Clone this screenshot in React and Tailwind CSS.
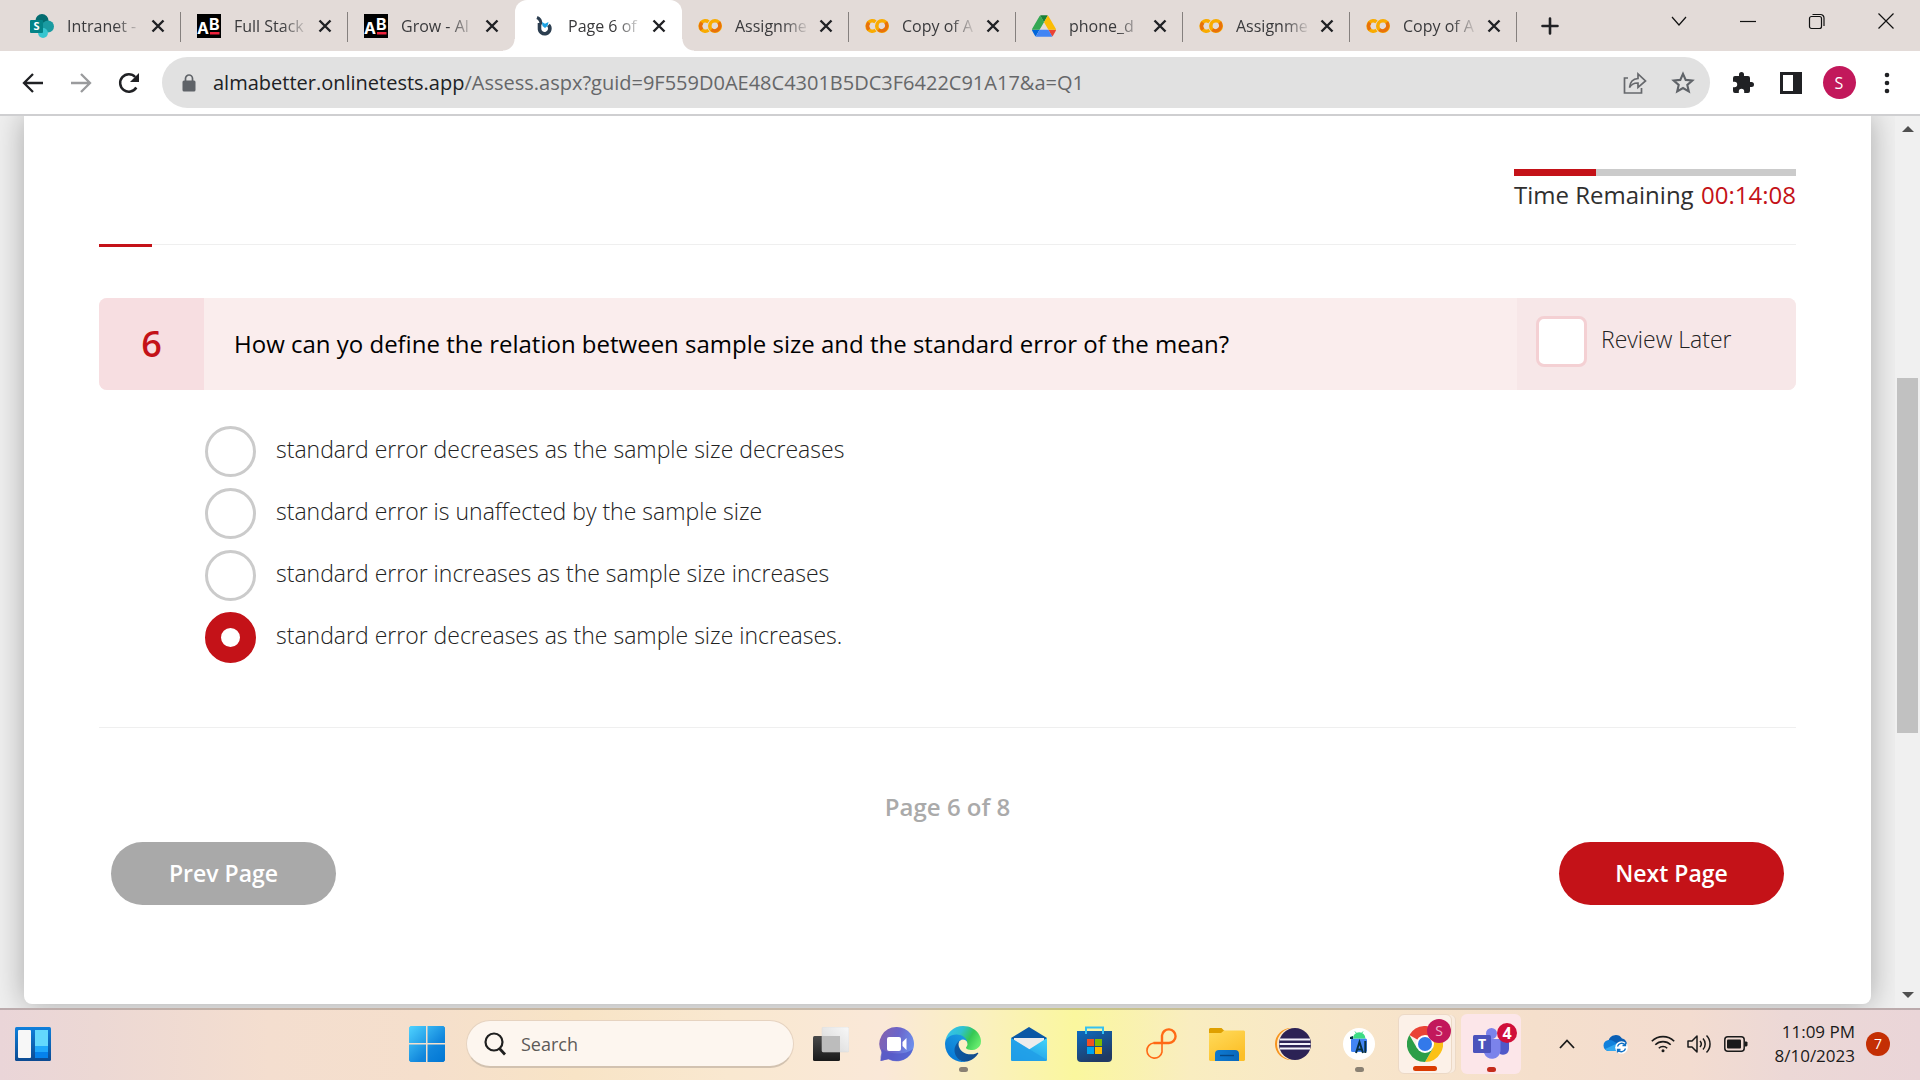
import React from "react";

const SANS = "font-['Open_Sans','Noto_Sans',sans-serif]";

/* ---------- site icons ---------- */

function SharePointIcon() {
  return (
    <svg viewBox="0 0 24 24" className="size-6">
      <circle cx="12" cy="6.5" r="6.5" fill="#036c70" />
      <circle cx="18" cy="12.5" r="6" fill="#1a9ba1" />
      <circle cx="13" cy="19" r="4.9" fill="#37c6d0" />
      <rect x="0" y="6" width="13" height="13" rx="1" fill="#038387" />
      <text x="6.5" y="16.4" textAnchor="middle" fontSize="11" fontWeight="700" fill="#fff" fontFamily="Open Sans, sans-serif">S</text>
    </svg>
  );
}

function AbIcon() {
  return (
    <svg viewBox="0 0 24 24" className="size-6">
      <rect width="24" height="24" fill="#000" />
      <text x="0" y="20" fontSize="16" fontWeight="700" fill="#fff" fontFamily="Inter, sans-serif">A</text>
      <text x="12" y="16" fontSize="16" fontWeight="700" fill="#fff" fontFamily="Inter, sans-serif">B</text>
      <rect x="13" y="18" width="9.500" height="2.500" fill="#f0223c" />
    </svg>
  );
}

function AssessIcon() {
  return (
    <svg viewBox="0 0 24 24" className="size-6">
      <path d="M6 3.500c2.500 1 4 3.500 4 7" fill="none" stroke="#2c3e50" strokeWidth="3" />
      <path d="M8.500 9v5a5.200 5.200 0 1 0 9-3" fill="none" stroke="#2c3e50" strokeWidth="3.600" />
      <path d="M11 8l3 1.800L17.500 8l-1 4-2.500 2-2.500-2z" fill="#1ba1e2" />
    </svg>
  );
}

function ColabIcon() {
  return (
    <svg viewBox="0 0 24 24" className="size-6" fill="none" strokeWidth="3.600">
      <path d="M10.500 7.900A5.200 5.200 0 1 0 10.500 16.100" stroke="#f9ab00" />
      <path d="M4 8.600A5.200 5.200 0 0 0 4 15.600" stroke="#e8710a" />
      <circle cx="17" cy="12" r="5.200" stroke="#f9ab00" />
      <path d="M20.700 8.400A5.200 5.200 0 0 1 13.400 15.700" stroke="#e8710a" />
    </svg>
  );
}

function DriveIcon() {
  return (
    <svg viewBox="0 0 87.3 78" className="size-6">
      <path d="m6.6 66.85 3.85 6.65c.8 1.4 1.95 2.5 3.3 3.3l13.75-23.8h-27.5c0 1.55.4 3.1 1.2 4.5z" fill="#0066da" />
      <path d="m43.65 25-13.75-23.8c-1.35.8-2.5 1.9-3.3 3.3l-25.4 44a9.06 9.06 0 0 0-1.2 4.5h27.5z" fill="#34a853" />
      <path d="m73.55 76.8c1.35-.8 2.5-1.9 3.3-3.3l1.6-2.75 7.65-13.25c.8-1.4 1.2-2.95 1.2-4.5h-27.502l5.852 11.5z" fill="#ea4335" />
      <path d="m43.65 25 13.75-23.8c-1.35-.8-2.9-1.2-4.5-1.2h-18.5c-1.6 0-3.15.45-4.5 1.2z" fill="#188038" />
      <path d="m59.8 53h-32.3l-13.75 23.8c1.35.8 2.9 1.2 4.5 1.2h50.8c1.6 0 3.15-.45 4.5-1.2z" fill="#4285f4" />
      <path d="m73.4 26.5-12.7-22c-.8-1.4-1.95-2.5-3.3-3.3l-13.75 23.8 16.15 28h27.45c0-1.55-.4-3.1-1.2-4.5z" fill="#fbbc04" />
    </svg>
  );
}

/* ---------- browser frame ---------- */

const TABS = [
  { title: "Intranet -", Icon: SharePointIcon, divider: true },
  { title: "Full Stack", Icon: AbIcon, divider: true },
  { title: "Grow - Al", Icon: AbIcon },
  { title: "Page 6 of", Icon: AssessIcon, active: true },
  { title: "Assignme", Icon: ColabIcon, divider: true },
  { title: "Copy of A", Icon: ColabIcon, divider: true },
  { title: "phone_d", Icon: DriveIcon, divider: true },
  { title: "Assignme", Icon: ColabIcon, divider: true },
  { title: "Copy of A", Icon: ColabIcon, divider: true },
];

function Tab({ title, Icon, active, divider }) {
  return (
    <div className={"relative flex h-[51px] w-[167px] min-w-0 items-center pl-4 pr-4 " + (active ? "rounded-t-xl bg-white" : "")}>
      {active && (
        <>
          <span className="absolute -left-3 bottom-0 size-3 bg-[radial-gradient(circle_at_0_0,transparent_11px,white_12px)]" />
          <span className="absolute -right-3 bottom-0 size-3 bg-[radial-gradient(circle_at_100%_0,transparent_11px,white_12px)]" />
        </>
      )}
      <span className="shrink-0"><Icon /></span>
      <span className="ml-[13px] min-w-0 flex-1 whitespace-nowrap text-base text-[#3a3a3c] [mask-image:linear-gradient(to_right,black_60%,transparent_94%)]">
        {title}
      </span>
      <button aria-label={"Close " + title} className="ml-1 shrink-0">
        <svg viewBox="0 0 14 14" className="size-3.5" stroke="#202124" strokeWidth="2.400"><path d="M1.500 1.500l11 11M12.500 1.500l-11 11" /></svg>
      </button>
      {divider && <span className="absolute right-0 top-3 h-[30px] w-px bg-[#85807e]" />}
    </div>
  );
}

function TabStrip() {
  const controls = [
    ["Search tabs", <path d="M8 9l7 8 7-8" />],
    ["Minimize", <path d="M7 13.500h16" />],
    ["Restore", <><rect x="7.500" y="8.500" width="12" height="12" rx="2" /><path d="M10.500 6.500h8a3.500 3.500 0 0 1 3.500 3.500v8" /></>],
    ["Close window", <path d="M7.500 5.500l15 15M22.500 5.500l-15 15" />],
  ];
  return (
    <div className="flex h-[51px] bg-[#e3dbd8] pl-3.5">
      <div className="flex min-w-0">
        {TABS.map((t, i) => <Tab key={i} {...t} />)}
      </div>
      <button aria-label="New tab" className="ml-2 flex w-[50px] items-center justify-center">
        <svg viewBox="0 0 18 18" className="size-[18px]" stroke="#202124" strokeWidth="2.600" strokeLinecap="round"><path d="M9 1.500v15M1.500 9h15" /></svg>
      </button>
      <div className="ml-auto flex">
        {controls.map(([label, shape]) => (
          <button key={label} aria-label={label} className="flex w-[69px] items-start justify-center pt-2">
            <svg viewBox="0 0 30 27" className="h-[27px] w-[30px]" fill="none" stroke="#111" strokeWidth="1.200">{shape}</svg>
          </button>
        ))}
      </div>
    </div>
  );
}

function ToolButton({ label, children }) {
  return <button aria-label={label} className="flex h-12 w-12 shrink-0 items-center justify-center">{children}</button>;
}

function Toolbar() {
  return (
    <div className="flex h-[65px] items-center gap-[9px] border-b-2 border-[#cfcfd1] bg-white px-[9px]">
      <div className="flex">
        <ToolButton label="Back">
          <svg viewBox="0 0 22 22" className="size-[22px]" fill="none" stroke="#202124" strokeWidth="2.300"><path d="M21 11H2.500M11 2L2 11l9 9" /></svg>
        </ToolButton>
        <ToolButton label="Forward">
          <svg viewBox="0 0 22 22" className="size-[22px]" fill="none" stroke="#9a9b9d" strokeWidth="2.300"><path d="M1 11h18.500M11 2l9 9-9 9" /></svg>
        </ToolButton>
        <ToolButton label="Reload">
          <svg viewBox="0 0 22 22" className="size-[22px]"><path d="M18.300 15.500A8.700 8.700 0 1 1 17.200 5" fill="none" stroke="#202124" strokeWidth="2.500" /><path d="M21 1v9h-9z" fill="#202124" /></svg>
        </ToolButton>
      </div>
      <div className="flex h-[51px] min-w-0 flex-1 items-center rounded-full bg-[#e1e1e1] pl-5 pr-[3px]">
        <svg viewBox="0 0 14 18" className="h-[18px] w-3.5 shrink-0"><rect x="0.500" y="6.500" width="13" height="11" rx="1.500" fill="#5f6368" /><path d="M3.500 7V4.500a3.500 3.500 0 0 1 7 0V7" fill="none" stroke="#5f6368" strokeWidth="1.700" /></svg>
        <div aria-label="Address" className="ml-[17px] min-w-0 flex-1 overflow-hidden whitespace-nowrap text-xl text-[#666769]">
          <span className="text-[#202124]">almabetter.onlinetests.app</span>/Assess.aspx?guid=9F559D0AE48C4301B5DC3F6422C91A17&amp;a=Q1
        </div>
        <ToolButton label="Share">
          <svg viewBox="0 0 24 22" className="h-[22px] w-6" fill="none" stroke="#66686c" strokeWidth="1.700"><path d="M5 6H1.500v15h17v-5" /><path d="M6.500 15.500C7 10 10.500 6.800 15 6.500V2l7.500 7L15 15.500V11c-4-.2-6.500 1.200-8.500 4.500z" /></svg>
        </ToolButton>
        <ToolButton label="Bookmark">
          <svg viewBox="0 0 24 24" className="size-6"><path d="M12 2.800l2.700 6.100 6.600.6-5 4.400 1.500 6.500L12 17l-5.800 3.400 1.500-6.500-5-4.400 6.600-.6z" fill="none" stroke="#5f6368" strokeWidth="2.100" /></svg>
        </ToolButton>
      </div>
      <div className="flex">
        <ToolButton label="Extensions">
          <svg viewBox="0 0 24 24" className="size-6" fill="#202124"><path d="M20.500 11H19V7a2 2 0 0 0-2-2h-4V3.500a2.500 2.500 0 0 0-5 0V5H4a2 2 0 0 0-2 2v3.800h1.500a2.700 2.700 0 0 1 0 5.400H2V20a2 2 0 0 0 2 2h3.800v-1.500a2.700 2.700 0 0 1 5.400 0V22H17a2 2 0 0 0 2-2v-4h1.500a2.500 2.500 0 0 0 0-5z" /></svg>
        </ToolButton>
        <ToolButton label="Side panel">
          <svg viewBox="0 0 22 22" className="size-[22px]"><path d="M0 0h22v22H0zM3 3v16h10V3z" fillRule="evenodd" fill="#202124" /></svg>
        </ToolButton>
        <ToolButton label="Profile">
          <span className="flex size-[33px] items-center justify-center rounded-full bg-[#c2185b] text-base text-white">S</span>
        </ToolButton>
        <ToolButton label="Menu">
          <svg viewBox="0 0 6 22" className="h-[22px] w-1.5" fill="#202124"><circle cx="3" cy="3" r="2.300" /><circle cx="3" cy="11" r="2.300" /><circle cx="3" cy="19" r="2.300" /></svg>
        </ToolButton>
      </div>
    </div>
  );
}

/* ---------- assessment page ---------- */

const OPTIONS = [
  "standard error decreases as the sample size decreases",
  "standard error is unaffected by the sample size",
  "standard error increases as the sample size increases",
  "standard error decreases as the sample size increases.",
];

function Assessment() {
  return (
    <main className="mx-6 mb-1 min-w-0 flex-1 rounded-b-lg bg-white px-[75px] shadow-[0_0_30px_rgba(0,0,0,0.3)]">
      <div className="flex justify-end pt-[53px]">
        <div className="w-[282px]">
          <div className="h-[7px] bg-[#cbcbcb]"><div className="h-full w-[82px] bg-[#c41218]" /></div>
          <p className="mt-0.5 flex h-[34px] items-center justify-between whitespace-nowrap text-2xl text-[#2f2f2f]">
            <span>Time Remaining</span> <span className="font-medium text-[#c41218]">00:14:08</span>
          </p>
        </div>
      </div>

      <div className="mt-[32px] h-[3px] border-t border-[#efefef]"><div className="-mt-px h-[3px] w-[53px] bg-[#c41218]" /></div>

      <section className="mt-[51px] flex h-[92px] overflow-hidden rounded-lg bg-[#faeded]">
        <div className="flex w-[105px] items-center justify-center bg-[#f7dee1] text-4xl font-semibold text-[#c41218]">6</div>
        <h1 className="flex flex-1 items-center pl-[30px] text-2xl text-black">
          How can yo define the relation between sample size and the standard error of the mean?
        </h1>
        <label className="flex w-[279px] items-start bg-[#f7e7e8] pl-[19px] pt-[18px] text-[23px] font-[350] text-[#222]">
          <input type="checkbox" className="size-[51px] appearance-none rounded-lg border-[3px] border-[#f4d0d3] bg-white" />
          <span className="ml-3.5 leading-[46px]">Review Later</span>
        </label>
      </section>

      <fieldset aria-label="Answers" className="mt-9 flex flex-col gap-[11px] pl-[106px]">
        {OPTIONS.map((o, i) => (
          <label key={i} className="flex h-[51px] items-start text-[23px] font-[350] text-[#222]">
            <input
              type="radio"
              name="answer"
              defaultChecked={i === 3}
              className="size-[51px] appearance-none rounded-full border-[3px] border-[#cbcbcb] bg-white checked:border-[16px] checked:border-[#c41218]"
            />
            <span className="ml-5 leading-[46px]">{o}</span>
          </label>
        ))}
      </fieldset>

      <footer className="mt-16 border-t border-[#efefef] px-3 pt-[61px]">
        <p className="text-center text-2xl font-semibold leading-9 text-[#aaa]">Page 6 of 8</p>
        <div className="mt-[17px] flex justify-between pb-[99px]">
          <button className="h-[63px] w-[225px] rounded-full bg-[#a9a9a9] text-[23px] font-semibold text-white">Prev Page</button>
          <button className="h-[63px] w-[225px] rounded-full bg-[#c41218] text-[23px] font-semibold text-white">Next Page</button>
        </div>
      </footer>
    </main>
  );
}

function Scrollbar() {
  return (
    <div className="z-10 flex w-[25px] shrink-0 flex-col items-center bg-[#f0f0f0] py-2.5">
      <svg viewBox="0 0 12 6" className="h-1.5 w-3" fill="#505050"><path d="M0 6l6-6 6 6z" /></svg>
      <div className="flex w-full flex-1 flex-col">
        <div className="flex-[246]" />
        <div className="ml-0.5 w-[21px] flex-[355] bg-[#c1c1c1]" />
        <div className="flex-[259]" />
      </div>
      <svg viewBox="0 0 12 6" className="h-1.5 w-3" fill="#505050"><path d="M0 0h12L6 6z" /></svg>
    </div>
  );
}

/* ---------- taskbar ---------- */

function WidgetsIcon() {
  return (
    <svg viewBox="0 0 36 34" className="h-[34px] w-9">
      <defs>
        <linearGradient id="wg" x1="0" y1="0" x2="0" y2="1"><stop stopColor="#0f80dc" /><stop offset="1" stopColor="#0b4a92" /></linearGradient>
      </defs>
      <rect width="36" height="34" rx="1.500" fill="url(#wg)" />
      <rect x="3" y="3" width="13" height="28" rx="1" fill="#f7f7f7" />
      <rect x="20" y="3" width="13" height="16" fill="#63d8fd" />
      <rect x="20" y="19" width="13" height="6" fill="#1fa8fb" />
      <rect x="20" y="25" width="13" height="6" fill="#0582ec" />
    </svg>
  );
}

function StartIcon() {
  return (
    <svg viewBox="0 0 36 36" className="size-9">
      <defs>
        <linearGradient id="win" gradientUnits="userSpaceOnUse" x1="0" y1="0" x2="34" y2="36"><stop stopColor="#4fd3ff" /><stop offset="0.650" stopColor="#1186dc" /><stop offset="1" stopColor="#0277d4" /></linearGradient>
      </defs>
      <path d="M1.500 0H17v17H0V1.500zM18.500 0H34.500L36 1.500V17H18.500zM0 18.500h17V36H1.500L0 34.500zM18.500 18.500H36v16L34.500 36h-16z" fill="url(#win)" />
    </svg>
  );
}

function TaskViewIcon() {
  return (
    <svg viewBox="0 0 36 34" className="h-[34px] w-9">
      <defs>
        <linearGradient id="tv" x1="0" y1="0" x2="0" y2="1"><stop stopColor="#4a4a4a" /><stop offset="1" stopColor="#191919" /></linearGradient>
        <linearGradient id="tw" x1="1" y1="0" x2="0" y2="1"><stop stopColor="#f8f8f8" /><stop offset="1" stopColor="#d5d5d5" /></linearGradient>
      </defs>
      <rect y="9" width="27" height="25" rx="1.500" fill="url(#tv)" />
      <rect x="9" width="27" height="25" rx="1.500" fill="url(#tw)" stroke="#dadada" strokeWidth="0.500" />
      <path d="M9 9h18v16H10.500L9 23.500z" fill="#bcbcbc" />
    </svg>
  );
}

function ChatIcon() {
  return (
    <svg viewBox="0 0 36 36" className="size-9">
      <defs>
        <linearGradient id="ch" x1="0" y1="0.200" x2="1" y2="0.500"><stop stopColor="#8462ae" /><stop offset="0.500" stopColor="#6b65ca" /><stop offset="1" stopColor="#6d90ec" /></linearGradient>
      </defs>
      <path d="M18 1a17 17 0 1 1-8 32L1.500 35 3 27A17 17 0 0 1 18 1z" fill="url(#ch)" />
      <path d="M3 27a17 17 0 0 0 31-4c-8 6-22 6-31 0l-1.500 8 .2 4L10 33z" fill="#5059c9" opacity="0.700" />
      <rect x="8" y="11" width="14" height="14" rx="2" fill="#fff" />
      <path d="M23.500 16l4-4v12l-4-4z" fill="#fff" />
    </svg>
  );
}

function EdgeIcon() {
  return (
    <svg viewBox="4.63 4.92 256 256" className="size-9">
      <defs>
        <linearGradient id="e1" x1="0" y1="0.500" x2="1" y2="0.600"><stop stopColor="#0c59a4" /><stop offset="1" stopColor="#114a8b" /></linearGradient>
        <linearGradient id="e2" x1="0.800" y1="0" x2="0.200" y2="1"><stop stopColor="#1b9de2" /><stop offset="0.600" stopColor="#0f85d9" /><stop offset="1" stopColor="#0374d4" /></linearGradient>
        <linearGradient id="e3" x1="0" y1="0.200" x2="1" y2="0.600"><stop stopColor="#35c1f1" /><stop offset="0.400" stopColor="#2fc2cf" /><stop offset="0.700" stopColor="#36c752" /><stop offset="1" stopColor="#66eb6e" /></linearGradient>
      </defs>
      <path d="M235.680 195.460a93.730 93.730 0 0 1-10.540 4.710 101.870 101.870 0 0 1-35.900 6.460c-47.320 0-88.540-32.550-88.540-74.320A31.480 31.480 0 0 1 117.130 105c-42.800 1.800-53.800 46.400-53.800 72.530 0 73.880 68.090 81.370 82.760 81.370 7.910 0 19.840-2.300 27-4.560l1.310-.44a128.340 128.340 0 0 0 66.600-52.800 4 4 0 0 0-5.320-5.640z" fill="url(#e1)" />
      <path d="M110.340 246.340A79.200 79.200 0 0 1 87.600 225a80.720 80.720 0 0 1 29.530-120c3.120-1.470 8.450-4.130 15.540-4a32.350 32.350 0 0 1 25.690 13 31.880 31.880 0 0 1 6.360 18.660c0-.21 24.460-79.600-80-79.600-43.900 0-80 41.660-80 78.210a130.150 130.150 0 0 0 12.110 56 128 128 0 0 0 156.380 67.110 75.550 75.550 0 0 1-62.780-8z" fill="url(#e2)" />
      <path d="M156.940 153.780c-.81 1.050-3.300 2.500-3.300 5.660 0 2.610 1.700 5.120 4.720 7.230 14.380 10 41.490 8.680 41.560 8.680a59.560 59.560 0 0 0 30.270-8.350 61.380 61.380 0 0 0 30.430-52.880c.26-22.410-8-37.310-11.340-43.910C228.090 28.760 182.350 4.920 132.610 4.920a128 128 0 0 0-128 126.200c.48-36.540 36.800-66.050 80-66.050 3.500 0 23.460.34 42 10.070 16.340 8.580 24.900 18.940 30.850 29.210 6.180 10.670 7.280 24.150 7.280 29.520s-2.740 13.330-7.800 19.910z" fill="url(#e3)" />
    </svg>
  );
}

function MailIcon() {
  return (
    <svg viewBox="0 0 36 34" className="h-[34px] w-9">
      <defs>
        <linearGradient id="ml" x1="1" y1="0" x2="0.300" y2="1"><stop stopColor="#43d4fa" /><stop offset="1" stopColor="#1a98e4" /></linearGradient>
      </defs>
      <path d="M0 11L18 0l18 11v5H0z" fill="#0a58a5" />
      <path d="M3 11h30v5L18 25 3 16z" fill="#ececec" />
      <path d="M0 11l18 11.500L36 11v22l-1 1H1l-1-1z" fill="url(#ml)" />
      <path d="M0 11l36 22-1 1H1l-1-1z" fill="#219fe8" opacity="0.850" />
    </svg>
  );
}

function StoreIcon() {
  return (
    <svg viewBox="0 0 36 36" className="size-9">
      <defs>
        <linearGradient id="st" x1="0" y1="0" x2="0.500" y2="1"><stop stopColor="#0c6bc0" /><stop offset="1" stopColor="#213a63" /></linearGradient>
      </defs>
      <path d="M0 5h35v27a4 4 0 0 1-4 4H4a4 4 0 0 1-4-4z" fill="url(#st)" />
      <path d="M9 8V1.500h17V8" fill="none" stroke="#35c1f1" strokeWidth="2" />
      <path d="M10 13h7v7h-7z" fill="#f25022" /><path d="M18 13h7v7h-7z" fill="#7fba00" />
      <path d="M10 21h7v7h-7z" fill="#00a4ef" /><path d="M18 21h7v7h-7z" fill="#ffb900" />
    </svg>
  );
}

function LoopIcon() {
  return (
    <svg viewBox="0 0 36 36" className="size-9" fill="none" stroke="#ff6a16">
      <path d="M19 18V9.500a6.800 6.800 0 1 1 7 7.500H10.500" strokeWidth="2.400" />
      <path d="M19 16v10a7.600 7.600 0 1 1-8.500-9H19" strokeWidth="1.600" />
    </svg>
  );
}

function FolderIcon() {
  return (
    <svg viewBox="0 0 36 34" className="h-[34px] w-9">
      <defs>
        <linearGradient id="fd" x1="0" y1="0" x2="0.600" y2="1"><stop stopColor="#ffdb5c" /><stop offset="1" stopColor="#fcbf27" /></linearGradient>
        <linearGradient id="fb" x1="0" y1="0" x2="1" y2="0"><stop stopColor="#0e7ad2" /><stop offset="1" stopColor="#0a68bb" /></linearGradient>
      </defs>
      <path d="M0 2l1-1h11.500l3 3-3 3H0z" fill="#dfa000" />
      <path d="M0 6h12l3-2.500h20l1 1V33l-1 1H1l-1-1z" fill="url(#fd)" />
      <path d="M6 34v-7a4 4 0 0 1 4-4h16a4 4 0 0 1 4 4v7z" fill="url(#fb)" />
      <path d="M11 28.500h14" stroke="#064785" strokeWidth="1.400" />
    </svg>
  );
}

function EclipseIcon() {
  return (
    <svg viewBox="0 0 36 36" className="size-9">
      <circle cx="16" cy="18" r="16" fill="#f7941e" />
      <circle cx="18" cy="18" r="16" fill="#fbe8c8" />
      <circle cx="20" cy="18" r="16" fill="#2c2255" />
      <path d="M5 13.500h30M4.500 18h31M5 22.500h30" stroke="#f3f1fa" strokeWidth="1.800" />
    </svg>
  );
}

function AndroidStudioIcon() {
  return (
    <svg viewBox="0 0 36 36" className="size-9">
      <circle cx="18" cy="18" r="16" fill="#fff" />
      <rect x="10" y="12.500" width="16" height="13.500" rx="1.500" fill="#4285f4" />
      <path d="M12 12.500a6.200 6.200 0 0 1 12.400 0z" fill="#3ddc84" />
      <path d="M14 5.500l2 2.500M22 5.500L20 8" stroke="#3ddc84" strokeWidth="1" />
      <path d="M15 27l3.500-11L22 27M16 23.500h5M24.300 15v12" fill="none" stroke="#073042" strokeWidth="2" />
      <path d="M9 11l3-1v3h-3z" fill="#073042" />
    </svg>
  );
}

function ChromeIcon() {
  return (
    <svg viewBox="0 0 36 36" className="size-9">
      <path d="M18 18L2.400 9A18 18 0 0 1 33.600 9H18z" fill="#ea4335" />
      <path d="M18 18V9h15.600A18 18 0 0 1 18 36l7.800-13.500z" fill="#fbc116" />
      <path d="M18 18l7.800 4.500L18 36A18 18 0 0 1 2.400 9l7.800 13.500z" fill="#2c9e48" />
      <circle cx="18" cy="18" r="9" fill="#fff" />
      <circle cx="18" cy="18" r="7" fill="#3379ea" />
    </svg>
  );
}

function TeamsIcon() {
  return (
    <svg viewBox="0 0 36 36" className="size-9">
      <path d="M25 13h11v10a6 6 0 0 1-9 5z" fill="#5059c9" />
      <circle cx="18.500" cy="7.500" r="5.500" fill="#7b83eb" />
      <path d="M11 13h16.500v12a8.500 8.500 0 0 1-16.500 2z" fill="#7b83eb" />
      <rect y="9" width="18" height="18" rx="1.500" fill="#4b53bc" />
      <text x="9" y="23" textAnchor="middle" fontSize="14" fontWeight="700" fill="#fff" fontFamily="Open Sans, sans-serif">T</text>
    </svg>
  );
}

const APPS = [
  { label: "Task View", Icon: TaskViewIcon },
  { label: "Chat", Icon: ChatIcon },
  { label: "Edge", Icon: EdgeIcon, mark: "w-[9px] bg-[#8a8173]" },
  { label: "Mail", Icon: MailIcon },
  { label: "Microsoft Store", Icon: StoreIcon },
  { label: "Loop", Icon: LoopIcon },
  { label: "File Explorer", Icon: FolderIcon },
  { label: "Eclipse", Icon: EclipseIcon },
  { label: "Android Studio", Icon: AndroidStudioIcon, mark: "w-[9px] bg-[#8a8173]" },
  { label: "Chrome", Icon: ChromeIcon, mark: "w-6 bg-[#da3b01]", box: "border border-[#ecd9c6] bg-[#fcf1e8] shadow-[4px_0_0_-1px_#f9ece0,5px_0_0_-1px_#ecd9c6]", width: "w-[54px]", badge: "S", badgeStyle: "-right-2 -top-[7px] size-6 bg-[#c2185b] text-sm text-[#f0b4cb]" },
  { label: "Teams", Icon: TeamsIcon, mark: "w-[9px] bg-[#c42b1c]", box: "bg-[#fce6e9]", width: "w-[60px]", badge: "4", badgeStyle: "-right-2 -top-[3px] size-5 bg-[#d0103a] text-base font-bold text-white" },
];

function AppButton({ label, Icon, mark, box = "", width = "w-[60px]", badge, badgeStyle }) {
  return (
    <div className="flex w-[66px] justify-center">
      <button aria-label={label} className={"relative flex h-[60px] items-center justify-center rounded-md " + width + " " + box}>
        <span className="relative flex size-9 items-center justify-center">
          <Icon />
          {badge && <span className={"absolute flex items-center justify-center rounded-full leading-none " + badgeStyle}>{badge}</span>}
        </span>
        {mark && <span className={"absolute bottom-0.5 h-[5px] rounded-full " + mark} />}
      </button>
    </div>
  );
}

function Tray() {
  return (
    <div className="flex items-center justify-end pr-[30px]">
      <button aria-label="Show hidden icons">
        <svg viewBox="0 0 16 10" className="h-2.5 w-4" fill="none" stroke="#1a1a1a" strokeWidth="1.800"><path d="M1 9l7-7.500L15 9" /></svg>
      </button>
      <svg viewBox="0 0 26 20" className="ml-7 h-5 w-[26px]">
        <path d="M6 17a5.500 5.500 0 0 1-.5-10.500A7.500 7.500 0 0 1 19 4.500c3 .5 5 3 5 6.500L17 17z" fill="#0a5fb5" />
        <path d="M6 17a5.500 5.500 0 0 1 0-11c3-.2 5.500 1.500 9 4.500l-5 6.500z" fill="#1181dc" />
        <path d="M2 15l12-5.500 4 4V17H6a5.500 5.500 0 0 1-4-2z" fill="#32a8f0" />
        <circle cx="18.500" cy="13.500" r="6.300" fill="#fff" />
        <path d="M14.500 12.500a4.200 4.200 0 0 1 7.500-1.500M22.500 14.500a4.200 4.200 0 0 1-7.500 1.500M22.500 8.500V11.500h-3M14.500 18.500V15.500h3" fill="none" stroke="#1070c4" strokeWidth="1.300" />
      </svg>
      <svg viewBox="0 0 24 18" className="ml-[22px] h-[18px] w-6" fill="none" stroke="#1a1a1a" strokeWidth="1.600">
        <path d="M.8 6.300a15.800 15.800 0 0 1 22.400 0M4.300 9.800a10.900 10.900 0 0 1 15.400 0M7.800 13.200a6 6 0 0 1 8.400 0" />
        <circle cx="12" cy="15.800" r="1.500" fill="#1a1a1a" stroke="none" />
      </svg>
      <svg viewBox="0 0 25 20" className="ml-3 h-5 w-[25px]" fill="none" stroke="#1a1a1a" strokeWidth="1.500">
        <path d="M1 7h4l5-5v16l-5-5H1z" strokeLinejoin="round" />
        <path d="M13 7a4.500 4.500 0 0 1 0 6M16 4.500a8 8 0 0 1 0 11M19.500 1.500a12 12 0 0 1 0 17" />
      </svg>
      <svg viewBox="0 0 24 16" className="ml-3 h-4 w-6">
        <rect x="0.800" y="0.800" width="19.400" height="14.400" rx="3" fill="none" stroke="#1a1a1a" strokeWidth="1.500" />
        <rect x="3" y="3.500" width="14" height="9" rx="1" fill="#1a1a1a" />
        <path d="M21 5.500h1.500l1 1v3l-1 1H21z" fill="#1a1a1a" />
      </svg>
      <div className="ml-[26px] text-right text-[17px] leading-6 text-[#1a1a1a]">
        <div>11:09 PM</div>
        <div>8/10/2023</div>
      </div>
      <span className="ml-[11px] flex size-6 items-center justify-center rounded-full bg-[#c42f04] text-sm font-medium text-white">7</span>
    </div>
  );
}

function Taskbar() {
  return (
    <div className="grid h-[72px] grid-cols-[1fr_auto_1fr] border-t-2 border-black/20 bg-[linear-gradient(90deg,#ead5d8_0%,#ecd8d4_5%,#f4decf_14%,#f5dfcc_22%,#f8e4c6_30%,#f9e8d0_38%,#fae8d8_46%,#faf0c0_51%,#faf79e_56%,#f9edc0_62%,#f8e6ca_70%,#f5dfcc_80%,#f3dcd0_88%,#ecd8d6_93%,#ead5d8_100%)] pb-0.5">
      <div className="flex items-center pl-[15px]"><button aria-label="Widgets"><WidgetsIcon /></button></div>
      <div className="flex items-center pr-0.5">
        <div className="flex w-[66px] justify-center"><button aria-label="Start"><StartIcon /></button></div>
        <label className="ml-1.5 mr-1 flex h-12 w-[328px] items-center rounded-full border border-b-2 border-[#e6d3c0] border-b-[#d2c2b0] bg-[#fdf6ef] pl-4">
          <svg viewBox="0 0 24 24" className="size-6 shrink-0" fill="none" stroke="#1f1f1f" strokeWidth="2.200"><circle cx="11" cy="10" r="8.500" /><path d="M16.500 16.500l5.500 6" strokeWidth="2.800" /></svg>
          <input aria-label="Search" placeholder="Search" className="ml-3.5 w-full min-w-0 bg-transparent text-lg text-[#5c5a58] outline-none placeholder:text-[#5c5a58]" />
        </label>
        {APPS.map((a) => <AppButton key={a.label} {...a} />)}
      </div>
      <Tray />
    </div>
  );
}

export default function App() {
  return (
    <div className={"flex min-h-screen flex-col bg-[#efefef] " + SANS}>
      <TabStrip />
      <Toolbar />
      <div className="flex flex-1 overflow-hidden">
        <Assessment />
        <Scrollbar />
      </div>
      <Taskbar />
    </div>
  );
}
